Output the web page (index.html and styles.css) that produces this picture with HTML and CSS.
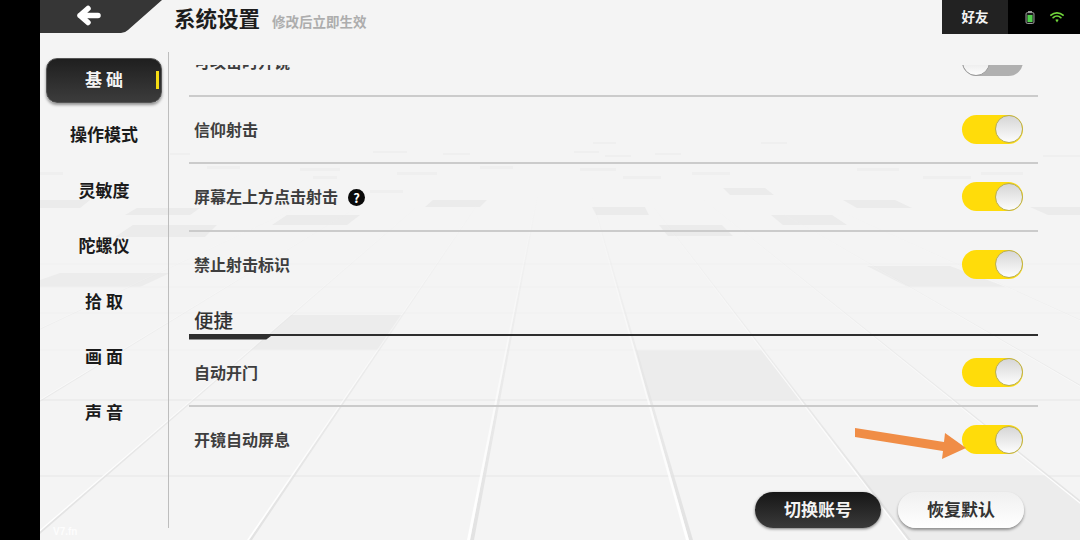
FILE: index.html
```html
<!DOCTYPE html>
<html lang="zh">
<head>
<meta charset="utf-8">
<title>系统设置</title>
<link rel="stylesheet" href="styles.css">
</head>
<body>
<div class="page">
  <svg class="floor" viewBox="0 0 1080 540" width="1080" height="540" aria-hidden="true">
    <defs>
      <linearGradient id="fadeW" gradientUnits="userSpaceOnUse" x1="0" y1="190" x2="0" y2="540">
        <stop offset="0" stop-color="#fff" stop-opacity="0"/>
        <stop offset="1" stop-color="#fff" stop-opacity="1"/>
      </linearGradient>
      <linearGradient id="fadeG" gradientUnits="userSpaceOnUse" x1="0" y1="190" x2="0" y2="540">
        <stop offset="0" stop-color="#e2e2e2" stop-opacity="0"/>
        <stop offset="1" stop-color="#e2e2e2" stop-opacity="1"/>
      </linearGradient>
    </defs>
    <g class="tile-soft">
      <polygon points="636,350 761,350 800,400 648,400"/>
      <polygon points="291,315 402,315 378,350 250,350"/>
      <polygon points="857,476 1046,476 1125,540 906,540"/>
      <polygon points="867,266 950,266 1006,287 908,287"/>
      <polygon points="60,273 170,273 140,287 20,287"/>
    </g>
    <g class="tile-mid">
      <polygon points="592,207 645,207 649,215 596,215"/>
      <polygon points="659,225 722,225 733,236 668,236"/>
      <polygon points="771,215 832,215 847,225 783,225"/>
      <polygon points="843,200 895,200 912,208 857,208"/>
      <polygon points="1030,207 1080,207 1080,215 1048,215"/>
      <polygon points="723,188 765,188 774,195 730,195"/>
      <polygon points="433,200 487,200 480,207 425,207"/>
      <polygon points="287,215 360,215 347,225 272,225"/>
      <polygon points="137,208 200,208 190,215 125,215"/>
      <polygon points="133,225 217,225 205,237 115,237"/>
      <polygon points="40,200 90,200 80,208 40,208"/>
    </g>
    <g class="dash">
      <rect x="593" y="142" width="23" height="2"/><rect x="574" y="151" width="25" height="2"/>
      <rect x="605" y="155" width="26" height="2"/><rect x="655" y="153" width="26" height="2"/>
      <rect x="580" y="168" width="36" height="3"/><rect x="623" y="176" width="38" height="3"/>
      <rect x="692" y="172" width="38" height="3"/><rect x="761" y="142" width="26" height="2"/>
      <rect x="857" y="168" width="42" height="3"/><rect x="923" y="176" width="48" height="3"/>
      <rect x="981" y="172" width="42" height="3"/><rect x="1043" y="155" width="37" height="2"/>
      <rect x="170" y="153" width="20" height="2"/><rect x="207" y="166" width="33" height="3"/>
      <rect x="300" y="168" width="40" height="3"/><rect x="313" y="176" width="24" height="3"/>
      <rect x="397" y="172" width="40" height="3"/><rect x="480" y="166" width="33" height="3"/>
      <rect x="373" y="151" width="34" height="2"/><rect x="443" y="153" width="27" height="2"/>
      <rect x="40" y="172" width="23" height="3"/><rect x="370" y="190" width="33" height="3"/>
    </g>
    <g class="hline">
      <line class="near" x1="40" y1="476" x2="1080" y2="476"/>
      <line class="near" x1="40" y1="400" x2="1080" y2="400"/>
      <line x1="40" y1="350" x2="1080" y2="350"/>
      <line x1="40" y1="313" x2="1080" y2="313"/>
      <line x1="40" y1="287" x2="1080" y2="287"/>
      <line x1="40" y1="264" x2="1080" y2="264"/>
    </g>
    <g fill="url(#fadeG)">
      <polygon points="559,84 -408,540 -405,540"/><polygon points="559,84 -189,540 -186,540"/>
      <polygon points="559,84 30,540 33,540"/><polygon points="559,84 249,540 252,540"/>
      <polygon points="559,84 470,540 474,540"/><polygon points="559,84 689,540 693,540"/>
      <polygon points="559,84 908,540 911,540"/><polygon points="559,84 1127,540 1130,540"/>
      <polygon points="559,84 1346,540 1349,540"/><polygon points="559,84 1565,540 1568,540"/>
    </g>
    <g fill="url(#fadeW)">
      <polygon points="559,84 -410,540 -408,540"/><polygon points="559,84 -191,540 -189,540"/>
      <polygon points="559,84 28,540 30,540"/><polygon points="559,84 247,540 249,540"/>
      <polygon points="559,84 467,540 470,540"/><polygon points="559,84 686,540 689,540"/>
      <polygon points="559,84 906,540 908,540"/><polygon points="559,84 1125,540 1127,540"/>
      <polygon points="559,84 1344,540 1346,540"/><polygon points="559,84 1563,540 1565,540"/>
    </g>
  </svg>

  <div class="rail"></div>

  <div class="app">
    <header class="topbar">
      <a class="back">
        <svg viewBox="0 0 122 33" width="122" height="33" aria-hidden="true">
          <path class="back-shape" d="M0 0H122L88 30Q85 33 81 33H0Z"/>
          <path class="back-arrow" d="M58 15.5H40M48 8.5L40 15.5L48 22.5"/>
        </svg>
      </a>
      <h1 class="title">系统设置</h1>
      <span class="subtitle">修改后立即生效</span>
      <div class="top-right">
        <div class="friends">好友</div>
        <div class="status">
          <svg viewBox="0 0 10 13" width="10" height="13" aria-hidden="true">
            <rect class="bat-cap" x="3" y="0" width="4" height="1.5"/>
            <rect class="bat-body" x="1" y="1.5" width="8" height="11" rx="1.5"/>
            <rect class="bat-fill" x="2.5" y="4" width="5" height="7"/>
          </svg>
          <svg class="wifi" viewBox="0 0 14 12" width="14" height="12" aria-hidden="true">
            <path class="wifi-arc" d="M1 4.2C4.4 1 9.6 1 13 4.2M3.2 6.6C5.4 4.6 8.6 4.6 10.8 6.6"/>
            <path class="wifi-dot" d="M5.3 8.8C6.3 8 7.7 8 8.7 8.8L7 11.4Z"/>
          </svg>
        </div>
      </div>
    </header>

    <div class="main">
      <nav class="sidebar">
        <div class="nav-item active">基 础<i class="nav-mark"></i></div>
        <div class="nav-item">操作模式</div>
        <div class="nav-item">灵敏度</div>
        <div class="nav-item">陀螺仪</div>
        <div class="nav-item">拾 取</div>
        <div class="nav-item">画 面</div>
        <div class="nav-item">声 音</div>
      </nav>

      <section class="content">
        <div class="list">
          <div class="rows">
            <div class="row"><span class="label">可攻击时开镜</span><span class="toggle off"><i class="knob"></i></span></div>
            <div class="row"><span class="label">信仰射击</span><span class="toggle"><i class="knob"></i></span></div>
            <div class="row"><span class="label">屏幕左上方点击射击<b class="help">?</b></span><span class="toggle"><i class="knob"></i></span></div>
            <div class="row plain"><span class="label">禁止射击标识</span><span class="toggle"><i class="knob"></i></span></div>
            <h2 class="group">便捷</h2>
            <div class="row"><span class="label">自动开门</span><span class="toggle"><i class="knob"></i></span></div>
            <div class="row plain"><span class="label">开镜自动屏息</span><span class="toggle"><i class="knob"></i></span></div>
          </div>
        </div>
        <div class="actions">
          <button class="btn dark">切换账号</button>
          <button class="btn light">恢复默认</button>
        </div>
      </section>
    </div>
  </div>

  <span class="version">V7.fn</span>

  <svg class="pointer" viewBox="0 0 1080 540" width="1080" height="540" aria-hidden="true">
    <polygon points="855,428 944,442 945,433 966,448 942,459 943,451 855,437"/>
  </svg>
</div>
</body>
</html>
```
FILE: styles.css
```css
* { box-sizing: border-box; }
html, body { margin: 0; padding: 0; }
body {
  width: 1080px;
  height: 540px;
  overflow: hidden;
  font-family: "Noto Sans CJK SC", "Noto Sans", sans-serif;
}
.page {
  position: relative;
  display: flex;
  width: 1080px;
  height: 540px;
  background: #f4f4f4;
  overflow: hidden;
}
.floor { position: absolute; left: 0; top: 0; }
.tile-soft polygon { fill: #ececec; }
.tile-mid polygon { fill: #ebebeb; }
.dash rect { fill: #efefef; }
.hline line { stroke: #f0f0f0; stroke-width: 1; }
.hline line.near { stroke: #ebebeb; stroke-width: 1.5; }

.rail { position: relative; width: 40px; background: #000; flex: none; }
.app { position: relative; display: flex; flex-direction: column; width: 1040px; }

/* top bar */
.topbar { display: flex; align-items: flex-start; height: 34px; flex: none; }
.back { display: block; width: 122px; height: 33px; flex: none; line-height: 0; }
.back-shape { fill: #363636; }
.back-arrow {
  fill: none;
  stroke: #fff;
  stroke-width: 5.5;
  stroke-linecap: round;
  stroke-linejoin: round;
}
.title {
  margin: 0 0 0 12px;
  font-size: 21.5px;
  line-height: 36px;
  font-weight: 700;
  color: #1d1d1d;
}
.subtitle {
  margin-left: 12px;
  font-size: 13.5px;
  line-height: 42px;
  font-weight: 700;
  color: #adadad;
}
.top-right { display: flex; margin-left: auto; height: 34px; }
.friends {
  width: 66px;
  background: #222;
  color: #f2f2f2;
  font-size: 13.5px;
  font-weight: 700;
  line-height: 32px;
  text-align: center;
}
.status {
  display: flex;
  align-items: center;
  gap: 15px;
  width: 72px;
  padding-left: 17px;
  background: #000;
}
.bat-cap { fill: #9a9a9a; }
.bat-body { fill: #1c1c1c; stroke: #9a9a9a; stroke-width: 1; }
.bat-fill { fill: #4fd24a; }
.wifi-arc { fill: none; stroke: #6fd33a; stroke-width: 1.8; stroke-linecap: round; }
.wifi-dot { fill: #6fd33a; }

/* body */
.main { display: flex; flex: 1; min-height: 0; }
.sidebar {
  display: flex;
  flex-direction: column;
  flex: none;
  width: 129px;
  height: 476px;
  margin-top: 18px;
  padding-right: 7px;
  border-right: 1.5px solid #bdbdbd;
}
.nav-item {
  position: relative;
  display: flex;
  align-items: center;
  justify-content: center;
  height: 55.5px;
  margin-left: 6px;
  width: 116px;
  padding-bottom: 3px;
  font-size: 17px;
  font-weight: 700;
  color: #1b1b1b;
}
.nav-item.active {
  height: 45px;
  margin-top: 5.5px;
  margin-bottom: 5px;
  border-radius: 11px;
  background: linear-gradient(#1f1f1f, #3c3c3c);
  color: #f3f3f3;
  border: 1px solid #555;
  box-shadow: 0 2px 3px rgba(0, 0, 0, .4);
}
.nav-mark {
  position: absolute;
  right: 2px;
  top: 12px;
  width: 3px;
  height: 18px;
  background: #f5dc14;
}

/* list */
.content { display: flex; flex-direction: column; width: 849px; margin-left: 20px; padding-top: 31px; }
.list { height: 415px; overflow: hidden; flex: none; }
.rows { margin-top: -36px; }
.row {
  display: flex;
  align-items: center;
  justify-content: space-between;
  height: 67.5px;
  padding: 0 15px 0 5px;
  border-bottom: 2px solid #cbcbcb;
}
.row.plain { border-bottom-color: transparent; }
.label {
  display: flex;
  align-items: center;
  padding-bottom: 1.5px;
  font-size: 16px;
  font-weight: 700;
  color: #3e3e3e;
  line-height: 1;
}
.help {
  display: block;
  width: 17px;
  height: 17px;
  margin: 2px 0 0 10px;
  border-radius: 50%;
  background: #0a0a0a;
  color: #fff;
  font-size: 13px;
  font-weight: 700;
  line-height: 17px;
  text-align: center;
}
.toggle {
  position: relative;
  display: block;
  width: 61px;
  height: 29px;
  border-radius: 15px;
  background: #ffdc0a;
}
.toggle.off { background: #b0b0b0; }
.knob {
  position: absolute;
  right: 0;
  top: 0.5px;
  width: 28px;
  height: 28px;
  border-radius: 50%;
  border: 1.5px solid #b9ae52;
  background: linear-gradient(#d6d6d6, #fdfdfd);
}
.off .knob { right: auto; left: 0; border-color: #9b9b9b; }

.group {
  position: relative;
  height: 36.5px;
  margin: 0 0 4px;
  padding-left: 5px;
  font-size: 19.5px;
  font-weight: 500;
  line-height: 42px;
  color: #333;
  border-bottom: 2px solid #2e2e2e;
}
.group::after {
  content: "";
  position: absolute;
  left: 0;
  bottom: -6px;
  width: 84px;
  height: 5px;
  background: #2e2e2e;
  clip-path: polygon(0 0, 100% 0, 92% 100%, 0 100%);
}

/* actions */
.actions { display: flex; justify-content: flex-end; gap: 17px; margin-top: 12px; padding-right: 14px; }
.btn {
  width: 126px;
  height: 36px;
  border: 0;
  border-radius: 18px;
  font-family: inherit;
  font-size: 17px;
  font-weight: 700;
  line-height: 33px;
  padding: 0 0 3px;
}
.btn.dark {
  background: linear-gradient(#161616, #3a3a3a);
  color: #f3f3f3;
  box-shadow: 0 1px 3px rgba(0, 0, 0, .5);
}
.btn.light {
  background: linear-gradient(#f0f0f0, #fff);
  color: #333;
  box-shadow: 0 2px 3px rgba(0, 0, 0, .4);
}

/* overlays */
.version {
  position: absolute;
  left: 53px;
  top: 525px;
  font-family: "Liberation Sans", sans-serif;
  font-size: 10px;
  font-weight: 700;
  line-height: 14px;
  color: rgba(255, 255, 255, .85);
}
.pointer { position: absolute; left: 0; top: 0; pointer-events: none; }
.pointer polygon { fill: #f08d46; }
```
